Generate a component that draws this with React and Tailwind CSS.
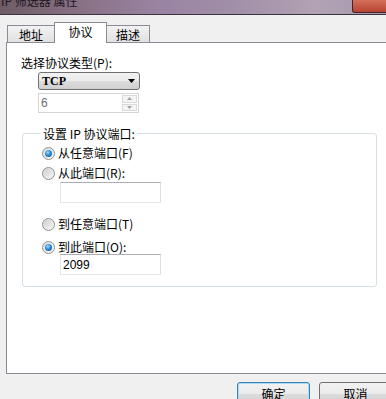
import React from "react";

const cjk = "font-['Noto_Sans_CJK_SC','Noto_Sans',sans-serif]";

function Radio({ checked, label }) {
  return (
    <div className="flex h-[14px] items-center">
      <span className="flex h-[13px] w-[13px] items-center justify-center rounded-full border border-[#8e8f8f] bg-[linear-gradient(135deg,#dcdcdc,#f8f8f8)]">
        {checked ? (
          <span className="h-[7px] w-[7px] rounded-full bg-[radial-gradient(circle_at_40%_35%,#9ee0ff_0%,#2a8ad4_45%,#0b4a8c_100%)]" />
        ) : (
          <span className="h-[9px] w-[9px] rounded-full bg-[linear-gradient(135deg,#cfcfcf,#f4f4f4)]" />
        )}
      </span>
      <span className="ml-[3px] text-[12px] leading-[14px] text-black">{label}</span>
    </div>
  );
}

function TextBox({ value }) {
  return (
    <div className="flex h-[21px] w-[101px] items-center border border-[#abadb3] border-b-[#e3e9ef] border-l-[#e2e3ea] border-r-[#dbdfe6] bg-white pl-[2px] font-['Liberation_Sans',sans-serif] text-[12px] text-black">
      {value}
    </div>
  );
}

export default function App() {
  return (
    <div className={`flex h-[399px] w-[386px] flex-col overflow-hidden bg-[#f0f0f0] ${cjk}`}>
      {/* title bar, mostly cut off */}
      <div className="flex h-[15px] shrink-0 items-start overflow-hidden border-b border-[#3a3440] bg-[linear-gradient(90deg,#6e5c66_0%,#8a7286_22%,#9a84a4_42%,#a18ea8_60%,#b2a2b4_82%,#a898b0_100%)]">
        <span className="-mt-[7px] whitespace-nowrap pl-[1px] text-[12px] leading-[16px] text-[#1c1620]">
          IP 筛选器 属性
        </span>
        <span className="ml-auto h-[13px] w-[34px] rounded-bl-[3px] border-b border-l border-[#4a2424] bg-[linear-gradient(180deg,#d4705a,#b84430)]" />
      </div>

      {/* tabs */}
      <div className="flex h-[21px] shrink-0 items-end pl-[7px] mt-[7px] text-[12px] text-black">
        <div className="flex h-[18px] w-[48px] items-center justify-center border border-b-0 border-[#898c95] bg-[linear-gradient(180deg,#f2f2f2,#e0e0e0)] leading-[14px]">
          地址
        </div>
        <div className="relative z-10 -ml-px flex h-[21px] w-[53px] items-start justify-center border border-b-0 border-[#898c95] bg-white pt-[2px] leading-[14px]">
          协议
        </div>
        <div className="-ml-px flex h-[18px] w-[44px] items-center justify-center border border-b-0 border-[#898c95] bg-[linear-gradient(180deg,#f2f2f2,#e0e0e0)] leading-[14px]">
          描述
        </div>
      </div>

      {/* tab page */}
      <div className="ml-[6px] -mt-px h-[332px] w-[400px] shrink-0 border border-[#898c95] bg-white pl-[14px] pt-[12px]">
        <div className="text-[12px] leading-[15px] text-black">选择协议类型(P):</div>

        <div className="ml-[17px] mt-[2px] flex h-[18px] w-[102px] items-center justify-between rounded-[3px] border border-[#707070] bg-[linear-gradient(180deg,#f2f2f2_0%,#ebebeb_50%,#dddddd_51%,#cfcfcf_100%)] pl-[3px] pr-[4px]">
          <span className="font-['Liberation_Serif',serif] text-[12px] font-bold leading-[14px] text-black">TCP</span>
          <svg width="7" height="4" viewBox="0 0 7 4">
            <path d="M0 0H7L3.5 4Z" fill="#000" />
          </svg>
        </div>

        <div className="ml-[17px] mt-[3px] flex h-[20px] w-[101px] items-stretch border border-[#d5d5d5] bg-white">
          <span className="flex-1 pl-[2px] pt-[2px] font-['Liberation_Sans',sans-serif] text-[12px] leading-[14px] text-[#6d6d6d]">6</span>
          <div className="my-[1px] mr-[1px] flex w-[15px] flex-col gap-px">
            <div className="flex flex-1 items-center justify-center border border-[#d9d9d9] bg-[#f4f4f4]">
              <svg width="5" height="3" viewBox="0 0 5 3"><path d="M0 3H5L2.5 0Z" fill="#a0a0a0" /></svg>
            </div>
            <div className="flex flex-1 items-center justify-center border border-[#d9d9d9] bg-[#f4f4f4]">
              <svg width="5" height="3" viewBox="0 0 5 3"><path d="M0 0H5L2.5 3Z" fill="#a0a0a0" /></svg>
            </div>
          </div>
        </div>

        <fieldset className="ml-[1px] mt-[13px] h-[161px] w-[355px] rounded-[3px] border border-[#d5dfe5] pl-[19px]">
          <legend className="-ml-[1px] px-[2px] text-[12px] leading-[15px] text-black">设置 IP 协议端口:</legend>
          <div className="mt-[5px] flex flex-col">
            <Radio checked label="从任意端口(F)" />
            <div className="mt-[6px]">
              <Radio label="从此端口(R):" />
            </div>
            <div className="ml-[18px] mt-[2px]">
              <TextBox value="" />
            </div>
            <div className="mt-[14px]">
              <Radio label="到任意端口(T)" />
            </div>
            <div className="mt-[9px]">
              <Radio checked label="到此端口(O):" />
            </div>
            <div className="ml-[18px]">
              <TextBox value="2099" />
            </div>
          </div>
        </fieldset>
      </div>

      {/* dialog buttons */}
      <div className="mt-[8px] flex shrink-0 gap-[9px] pl-[237px] text-[12px] text-black">
        <button className="flex h-[23px] w-[73px] shrink-0 items-center justify-center rounded-[3px] border border-[#3c7fb1] bg-[linear-gradient(180deg,#f2f2f2_0%,#ebebeb_50%,#dddddd_51%,#cfcfcf_100%)] shadow-[inset_0_0_0_1px_#a7dcf5] leading-[14px]">
          确定
        </button>
        <button className="flex h-[23px] w-[73px] shrink-0 items-center justify-center rounded-[3px] border border-[#707070] bg-[linear-gradient(180deg,#f2f2f2_0%,#ebebeb_50%,#dddddd_51%,#cfcfcf_100%)] leading-[14px]">
          取消
        </button>
      </div>
    </div>
  );
}
